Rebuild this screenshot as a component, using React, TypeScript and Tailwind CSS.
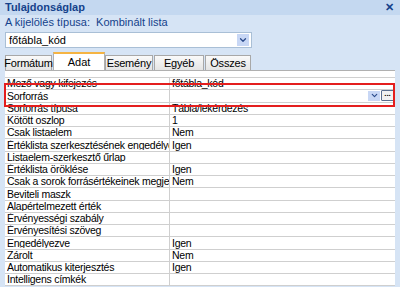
import { ChevronDown } from "lucide-react";

const rows: [string, string][] = [
  ["Mező vagy kifejezés", "főtábla_kód"],
  ["Sorforrás", ""],
  ["Sorforrás típusa", "Tábla/lekérdezés"],
  ["Kötött oszlop", "1"],
  ["Csak listaelem", "Nem"],
  ["Értéklista szerkesztésének engedélyezése", "Igen"],
  ["Listaelem-szerkesztő űrlap", ""],
  ["Értéklista öröklése", "Igen"],
  ["Csak a sorok forrásértékeinek megjelenítése", "Nem"],
  ["Beviteli maszk", ""],
  ["Alapértelmezett érték", ""],
  ["Érvényességi szabály", ""],
  ["Érvényesítési szöveg", ""],
  ["Engedélyezve", "Igen"],
  ["Zárolt", "Nem"],
  ["Automatikus kiterjesztés", "Igen"],
  ["Intelligens címkék", ""],
];

const tabs = ["Formátum", "Adat", "Esemény", "Egyéb", "Összes"];
const tabWidths = ["w-[47px]", "w-[52px]", "w-[48px]", "w-[50px]", "w-[46px]"];

const App = () => {
  return (
    <div
      className="w-[400px] h-[287px] overflow-hidden bg-[#d6e4f5] text-[11px] leading-none text-black"
      style={{ fontFamily: "'Liberation Sans', Arial, sans-serif" }}
    >
      {/* Title bar */}
      <div className="h-[15px] bg-[#c4d8f0] flex items-center justify-between pl-[5px] pr-[6px]">
        <span className="font-bold text-[#15428b]">Tulajdonságlap</span>
        <span className="font-bold text-[#15428b] text-[11px]">✕</span>
      </div>

      {/* Selection type */}
      <div className="h-[15px] flex items-center pl-[5px] text-[#15428b]">
        A kijelölés típusa:&nbsp;&nbsp;Kombinált lista
      </div>

      {/* Combo */}
      <div className="mt-[2px] ml-[5px] w-[247px] h-[16px] bg-white border border-[#a9bfd6] flex items-center">
        <span className="flex-1 pl-[3px]">főtábla_kód</span>
        <div className="w-[12px] h-[12px] mr-[2px] bg-[#c8d7f5] flex items-center justify-center">
          <ChevronDown size={10} strokeWidth={3} className="text-[#2a4a8a]" />
        </div>
      </div>

      {/* Tabs */}
      <div className="mt-[4px] ml-[5px] h-[18px] flex items-end">
        {tabs.map((t, i) =>
          t === "Adat" ? (
            <div
              key={t}
              className={`${tabWidths[i]} h-[18px] bg-white border-t-2 border-[#f5b443] border-x border-x-[#b0b0b0] flex items-center justify-center`}
            >
              {t}
            </div>
          ) : (
            <div
              key={t}
              className={`${tabWidths[i]} h-[15px] mr-[1px] bg-gradient-to-b from-[#fafafa] to-[#e4e4e4] border border-[#a8a8a8] border-b-0 flex items-center justify-center tracking-[-0.2px]`}
            >
              {t}
            </div>
          )
        )}
      </div>

      {/* Grid */}
      <div className="relative ml-[5px] w-[390px] bg-white border-t border-[#b0b0b0] pt-[6px] text-[10.5px] tracking-[-0.25px]">
        <div className="border-t border-[#d0d0d0]">
          {rows.map(([k, v]) => (
            <div key={k} className="h-[12.25px] flex border-b border-[#cfcfcf]">
              <div className="w-[165px] shrink-0 overflow-hidden whitespace-nowrap pl-[2px] border-r border-[#cfcfcf] flex items-center">
                <span className="block w-full overflow-hidden">{k}</span>
              </div>
              <div className="flex-1 pl-[2px] flex items-center overflow-hidden whitespace-nowrap">
                {k === "Sorforrás" ? (
                  <div className="flex-1 flex justify-end items-center gap-[1px] pr-[1px]">
                    <div className="w-[12px] h-[10px] bg-[#c8d7f5] flex items-center justify-center">
                      <ChevronDown size={9} strokeWidth={3} className="text-[#2a4a8a]" />
                    </div>
                    <div className="w-[13px] h-[11px] bg-[#f2f2f2] border border-[#5a6f8f] rounded-[1px] flex items-center justify-center text-[8px] font-bold leading-none pb-[3px] tracking-normal">
                      ...
                    </div>
                  </div>
                ) : (
                  v
                )}
              </div>
            </div>
          ))}
        </div>
        {/* Red highlight */}
        <div className="absolute left-[-1px] right-0 top-[12px] h-[24px] border-2 border-[#e41e1e] pointer-events-none" />
      </div>
    </div>
  );
};

export default App;
